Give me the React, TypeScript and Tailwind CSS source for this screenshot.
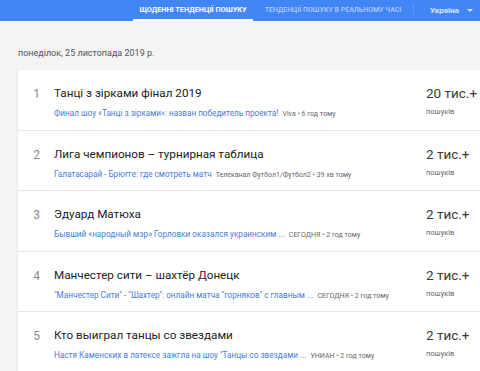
import React from "react";

const rows = [
  { n: 1, title: "Танці з зірками фінал 2019", link: "Финал шоу «Танці з зірками»: назван победитель проекта!", src: "Viva • 6 год тому", count: "20 тис.+" },
  { n: 2, title: "Лига чемпионов – турнирная таблица", link: "Галатасарай - Брюгге: где смотреть матч", src: "Телеканал Футбол1/Футбол2 • 39 хв тому", count: "2 тис.+" },
  { n: 3, title: "Эдуард Матюха", link: "Бывший «народный мэр» Горловки оказался украинским ...", src: "СЕГОДНЯ • 2 год тому", count: "2 тис.+" },
  { n: 4, title: "Манчестер сити – шахтёр Донецк", link: "\"Манчестер Сити\" - \"Шахтер\": онлайн матча \"горняков\" с главным ...", src: "СЕГОДНЯ • 2 год тому", count: "2 тис.+" },
  { n: 5, title: "Кто выиграл танцы со звездами", link: "Настя Каменских в латексе зажгла на шоу \"Танцы со звездами ...", src: "УНИАН • 2 год тому", count: "2 тис.+" },
];

export default function App() {
  return (
    <div className="w-[480px] h-[371px] overflow-hidden bg-[#f4f4f4]" style={{ fontFamily: "Roboto, 'Noto Sans', sans-serif" }}>
      <div className="h-[21px] bg-[#4285f4] flex items-stretch font-bold uppercase">
        <div className="w-[133px]" />
        <div className="w-[120px] flex items-center justify-center text-white text-[7.3px] border-b-2 border-white pt-[2px]">Щоденні тенденції пошуку</div>
        <div className="w-[160px] flex items-center justify-center text-white/60 text-[7px] font-medium">Тенденції пошуку в реальному часі</div>
        <div className="w-px my-[3px] bg-white/15" />
        <div className="flex items-center pl-[16px] text-white/80 text-[8px] normal-case">
          <span>Україна</span>
          <span className="ml-[8px] w-0 h-0 border-l-[3px] border-r-[3px] border-t-[3px] border-l-transparent border-r-transparent border-t-white/80" />
        </div>
      </div>
      <div className="pl-[18px] pt-[26px] text-[9px] text-[#555] h-[49px]">понеділок, 25 листопада 2019 р.</div>
      <div className="ml-[18px] w-[480px] bg-white shadow-[0_1px_2px_rgba(0,0,0,0.12)]">
        {rows.map((r, i) => (
          <div key={r.n} className={`h-[60.5px] flex ${i < rows.length - 1 ? "border-b border-[#e6e6e6]" : ""}`}>
            <div className="w-[36px] pt-[15px] text-right pr-[14px] text-[12px] text-[#8a8a8a]">{r.n}</div>
            <div className="w-[372px] pt-[15px]">
              <div className="text-[11.7px] text-[#222] leading-[16px] whitespace-nowrap">{r.title}</div>
              <div className="mt-[7px] text-[8.2px] leading-[10px] whitespace-nowrap">
                <span className="text-[#4a7bd8]">{r.link}</span>
                <span className="text-[#666] ml-[4px] text-[7px]">{r.src}</span>
              </div>
            </div>
            <div className="pt-[14px]">
              <div className="text-[13.5px] leading-[18px] text-[#3a3a3a]">{r.count}</div>
              <div className="mt-[5px] text-[7.5px] text-[#666] leading-[10px]">пошуків</div>
            </div>
          </div>
        ))}
      </div>
    </div>
  );
}
